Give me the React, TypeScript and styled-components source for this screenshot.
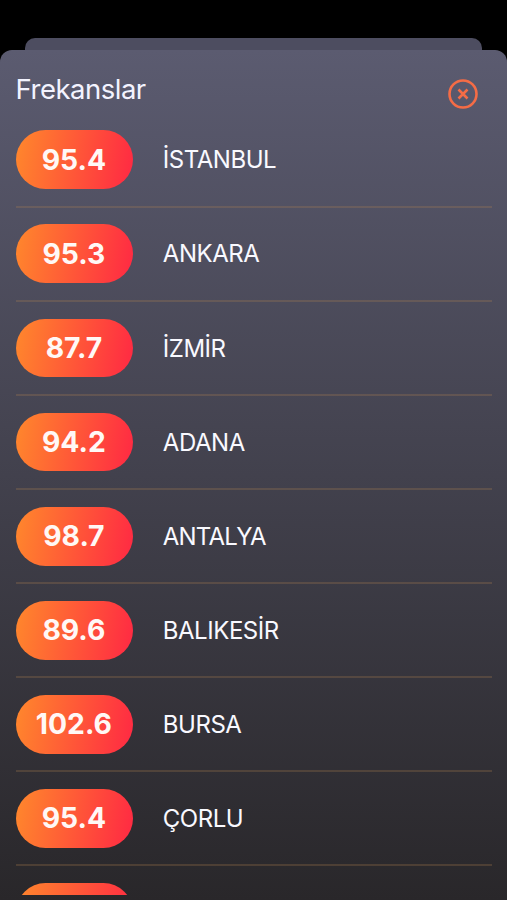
import React from "react";
import styled, { createGlobalStyle } from "styled-components";

const GlobalStyle = createGlobalStyle`
  * { box-sizing: border-box; }
  body { margin: 0; background: #000; overflow: hidden; font-family: Inter, "Liberation Sans", sans-serif; }
`;
const Screen = styled.main`
  height: 900px;
  padding-top: 38px;
  display: flex;
  flex-direction: column;
  background: #000;
`;
const BackCard = styled.div`
  height: 12px;
  flex: none;
  margin: 0 25px;
  border-radius: 10px 10px 0 0;
  background: #4d4d60;
`;
const Sheet = styled.section`
  flex: 1;
  min-height: 0;
  display: flex;
  flex-direction: column;
  padding: 0 15px 5px 15.6px;
  border-radius: 12px 12px 0 0;
  background: linear-gradient(#5b5b70, #29272a);
`;
const Header = styled.header`
  flex: none;
  height: 63.6px;
  padding: 21px 14px 0 0;
  display: flex;
  justify-content: space-between;
  align-items: flex-start;
`;
const Title = styled.h1`
  margin: 0;
  font-size: 27.5px;
  line-height: 36px;
  letter-spacing: -0.5px;
  font-weight: 400;
  color: #f3f3ff;
`;
const Close = styled.button`
  margin: 7.6px 0 0;
  padding: 0;
  border: 0;
  background: none;
  display: flex;
`;
const List = styled.ul`
  list-style: none;
  margin: 0;
  padding: 0;
  flex: 1;
  min-height: 0;
  overflow: hidden;
`;
const Row = styled.li`
  height: 94.08px;
  padding-top: 16.8px;
  display: flex;
  align-items: flex-start;
  gap: 29.6px;
  border-bottom: 2px solid rgba(180, 130, 80, 0.25);
`;
const Pill = styled.span`
  width: 117.6px;
  height: 58.8px;
  padding-right: 1px;
  border-radius: 30px;
  display: flex;
  align-items: center;
  justify-content: center;
  background: linear-gradient(100deg, #ff882c, #ff2d42 95%);
  color: #fff8f6;
  font-size: 28.3px;
  font-weight: 700;
`;
const City = styled.span<{ $tracking?: number }>`
  line-height: 60px;
  font-size: 24px;
  letter-spacing: ${({ $tracking = -0.46 }) => $tracking}px;
  color: #f9f9ff;
`;

interface Station {
  freq: string;
  city: string;
  tracking?: number;
}

const stations: Station[] = [
  { freq: "95.4", city: "İSTANBUL" },
  { freq: "95.3", city: "ANKARA" },
  { freq: "87.7", city: "İZMİR" },
  { freq: "94.2", city: "ADANA" },
  { freq: "98.7", city: "ANTALYA", tracking: -0.8 },
  { freq: "89.6", city: "BALIKESİR" },
  { freq: "102.6", city: "BURSA" },
  { freq: "95.4", city: "ÇORLU" },
  { freq: "", city: "" },
];

export default function App() {
  return (
    <Screen>
      <GlobalStyle />
      <BackCard />
      <Sheet>
        <Header>
          <Title>Frekanslar</Title>
          <Close aria-label="Kapat">
            <svg width="30" height="30" viewBox="0 0 30 30" fill="none" stroke="#f56c46" strokeWidth="2.6">
              <circle cx="15" cy="15" r="13.5" />
              <path d="M10.5 10.5l9 9M19.5 10.5l-9 9" />
            </svg>
          </Close>
        </Header>
        <List>
          {stations.map(({ freq, city, tracking }, i) => (
            <Row key={i}>
              <Pill>{freq}</Pill>
              <City $tracking={tracking}>{city}</City>
            </Row>
          ))}
        </List>
      </Sheet>
    </Screen>
  );
}
